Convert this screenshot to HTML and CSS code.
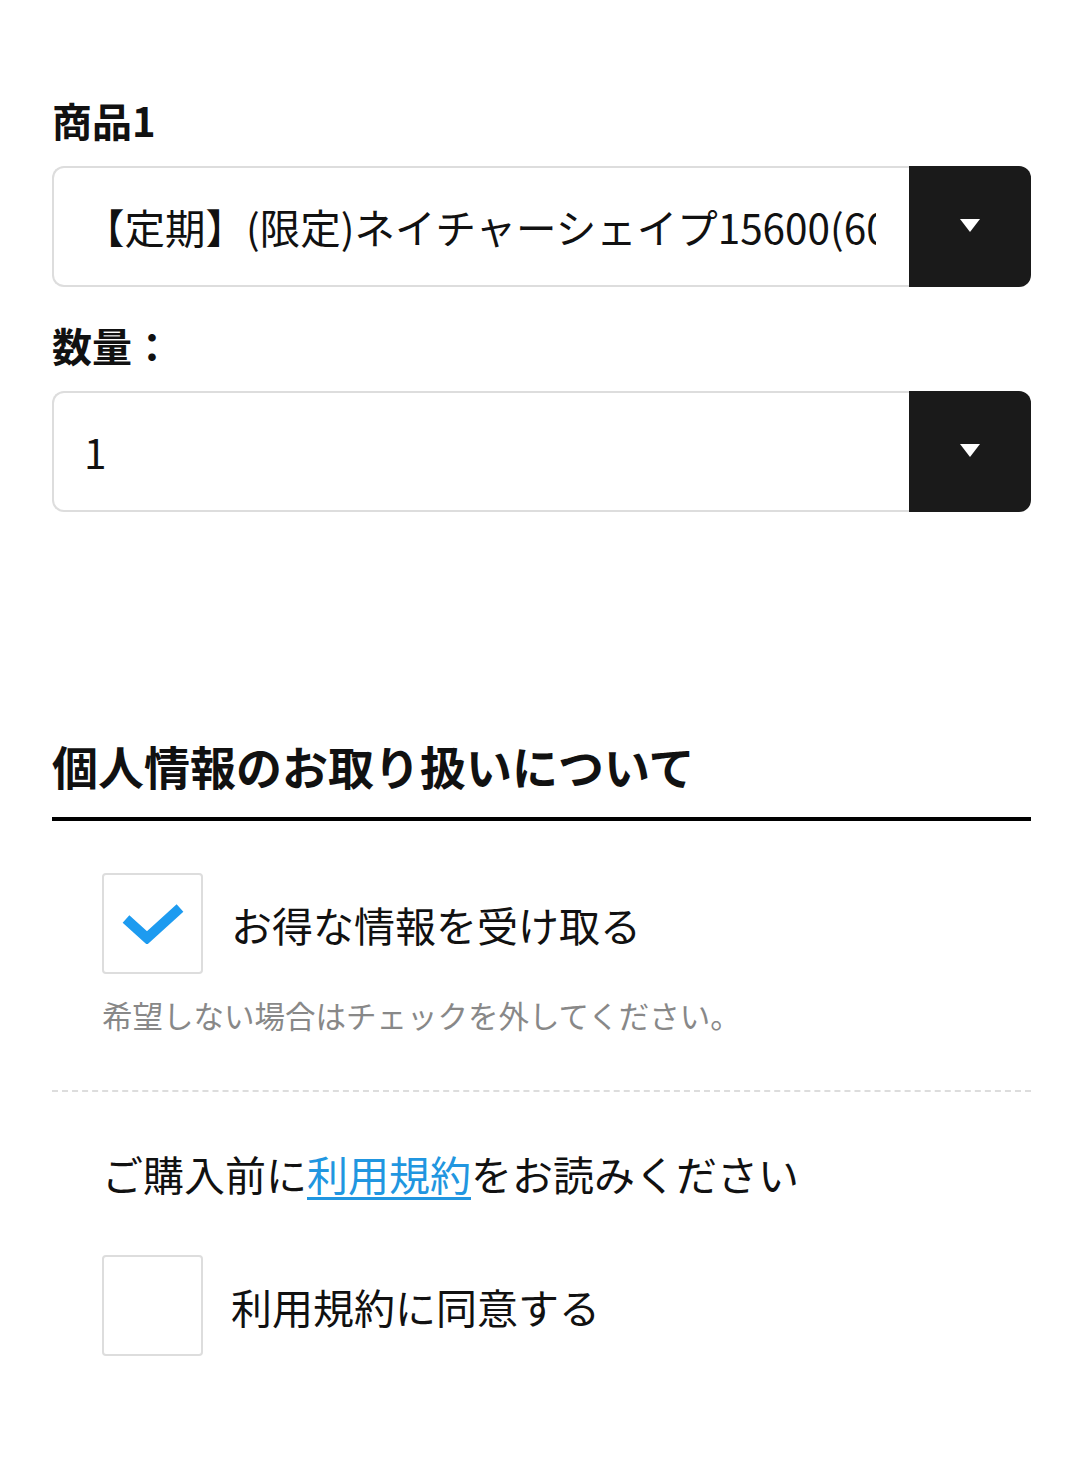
FILE: index.html
```html
<!DOCTYPE html>
<html lang="ja">
<head>
    <meta charset="UTF-8">
    <meta name="viewport" content="width=device-width, initial-scale=1.0">
    <title>ご注文フォーム</title>
    <link rel="stylesheet" href="styles.css">
</head>
<body>
    <section class="order-form">
        <div class="field">
            <p class="field-label">商品1</p>
            <div class="select">
                <div class="select-value"><span class="select-text">【定期】(限定)ネイチャーシェイプ15600(60日分)</span></div>
                <div class="select-btn"><span class="arrow"></span></div>
            </div>
        </div>

        <div class="field">
            <p class="field-label">数量：</p>
            <div class="select">
                <div class="select-value"><span class="select-text">1</span></div>
                <div class="select-btn"><span class="arrow"></span></div>
            </div>
        </div>

        <!-- 個人情報 -->
        <h2 class="section-title">個人情報のお取り扱いについて</h2>

        <div class="check-block">
            <label class="check-row">
                <span class="check-box">
                    <svg width="62" height="40" viewBox="0 0 62 40">
                        <path d="M4 15 L25 34 L58 4" fill="none" stroke="#1d9bf0" stroke-width="10"/>
                    </svg>
                </span>
                <span class="check-text">お得な情報を受け取る</span>
            </label>
            <p class="note">希望しない場合はチェックを外してください。</p>
        </div>

        <div class="terms">
            <p class="terms-text">ご購入前に<a href="#">利用規約</a>をお読みください</p>
            <label class="check-row">
                <span class="check-box"></span>
                <span class="check-text">利用規約に同意する</span>
            </label>
        </div>
    </section>
</body>
</html>
```

FILE: styles.css
```css
body {
    margin: 0;
    padding: 0;
    background-color: #fff;
    color: #111;
    font-family: "Noto Sans CJK JP", "Noto Sans", sans-serif;
}

.order-form {
    padding: 92px 48px 100px 52px;
}

.field-label {
    margin: 0 0 18px;
    font-size: 40px;
    font-weight: bold;
    line-height: 56px;
}

.field + .field .field-label {
    margin-top: 30px;
}

.select {
    display: flex;
    height: 121px;
}

.select-value {
    flex: 1;
    min-width: 0;
    display: flex;
    align-items: center;
    padding: 0 33px 0 30px;
    border: 2px solid #ddd;
    border-right: none;
    border-radius: 12px 0 0 12px;
    font-size: 40.5px;
}

.select-text {
    display: block;
    flex: 1;
    min-width: 0;
    white-space: nowrap;
    overflow: hidden;
}

.select-btn {
    width: 122px;
    display: flex;
    justify-content: center;
    align-items: center;
    background-color: #1a1a1a;
    border-radius: 0 12px 12px 0;
}

.arrow {
    width: 0;
    height: 0;
    border-left: 10px solid transparent;
    border-right: 10px solid transparent;
    border-top: 13px solid #fff;
    margin-top: -2px;
}

.section-title {
    margin: 223px 0 0;
    padding-bottom: 22px;
    border-bottom: 4px solid #000;
    font-size: 46px;
    font-weight: bold;
    line-height: 60px;
}

.check-block {
    padding: 52px 0 53px 50px;
    border-bottom: 2px dashed #ddd;
}

.check-row {
    display: flex;
    align-items: center;
    gap: 28px;
    cursor: pointer;
}

.check-box {
    width: 97px;
    height: 97px;
    flex-shrink: 0;
    display: flex;
    justify-content: center;
    align-items: center;
    border: 2px solid #ddd;
    border-radius: 4px;
}

.check-text {
    font-size: 41px;
    line-height: 56px;
}

.note {
    margin: 19px 0 0;
    color: #888;
    font-size: 30.5px;
    line-height: 44px;
}

.terms {
    padding: 53px 0 0 50px;
}

.terms-text {
    margin: 0 0 54px;
    font-size: 41px;
    line-height: 56px;
}

.terms-text a {
    color: #2196e0;
    text-decoration: underline;
    text-decoration-thickness: 3px;
    text-underline-offset: 6px;
}
```
